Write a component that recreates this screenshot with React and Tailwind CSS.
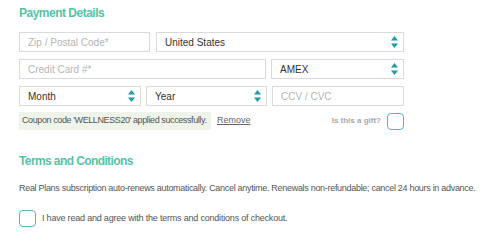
import React from "react";

const Arrows = () => (
  <svg width="7" height="12" viewBox="0 0 7 12" className="shrink-0">
    <path d="M3.5 0 L7 4.5 L0 4.5 Z" fill="#1b9bab" />
    <path d="M3.5 12 L7 7.5 L0 7.5 Z" fill="#1b9bab" />
  </svg>
);

const Input = ({ placeholder, className }) => (
  <div
    className={
      "h-[20px] border border-[#dadada] bg-white flex items-center px-[8px] text-[10px] text-[#b5b5b5] " +
      className
    }
  >
    {placeholder}
  </div>
);

const Select = ({ value, className }) => (
  <div
    className={
      "h-[20px] border border-[#dadada] bg-white flex items-center justify-between pl-[8px] pr-[5px] text-[10px] text-[#333] font-medium " +
      className
    }
  >
    <span>{value}</span>
    <Arrows />
  </div>
);

export default function App() {
  return (
    <div
      className="w-[500px] h-[236px] bg-white pl-[19px] pt-[5px] overflow-hidden"
      style={{ fontFamily: '"Liberation Sans", Arial, sans-serif' }}
    >
      <div className="w-[385px]">
        <h2 className="text-[12px] leading-[16px] font-bold text-[#56c4a4] tracking-[-0.5px]">
          Payment Details
        </h2>
        <div className="mt-[11px] flex flex-col gap-[7px]">
          <div className="flex gap-[6px]">
            <Input placeholder="Zip / Postal Code*" className="w-[131px]" />
            <Select value="United States" className="flex-1" />
          </div>
          <div className="flex gap-[5px]">
            <Input placeholder="Credit Card #*" className="w-[247px]" />
            <Select value="AMEX" className="flex-1" />
          </div>
          <div className="flex gap-[5px]">
            <Select value="Month" className="w-[122px]" />
            <Select value="Year" className="w-[121px]" />
            <Input placeholder="CCV / CVC" className="flex-1" />
          </div>
        </div>
        <div className="mt-[6px] flex items-center">
          <div className="h-[18px] w-[192px] bg-[#eef4ea] flex items-center px-[3px] text-[9px] text-[#555] whitespace-nowrap tracking-[-0.4px]">
            Coupon code 'WELLNESS20' applied successfully.
          </div>
          <span className="ml-[6px] text-[9px] text-[#666] underline">Remove</span>
          <div className="flex-1" />
          <span className="text-[8px] font-bold text-[#a8a8a8] mr-[6px]">
            Is this a gift?
          </span>
          <div className="w-[17px] h-[17px] border-[1.5px] border-[#5ab7bf] rounded-[4px]" />
        </div>
      </div>
      <h2 className="mt-[23px] text-[12px] leading-[16px] font-bold text-[#56c4a4] tracking-[-0.6px]">
        Terms and Conditions
      </h2>
      <p className="mt-[13px] text-[9px] leading-[12px] text-[#555] tracking-[-0.3px] whitespace-nowrap">
        Real Plans subscription auto-renews automatically. Cancel anytime. Renewals non-refundable; cancel 24 hours in advance.
      </p>
      <div className="mt-[16px] flex items-center gap-[6px]">
        <div className="w-[17px] h-[17px] border-[1.5px] border-[#5ab7bf] rounded-[4px]" />
        <span className="text-[9px] text-[#555] tracking-[-0.2px]">
          I have read and agree with the terms and conditions of checkout.
        </span>
      </div>
    </div>
  );
}
